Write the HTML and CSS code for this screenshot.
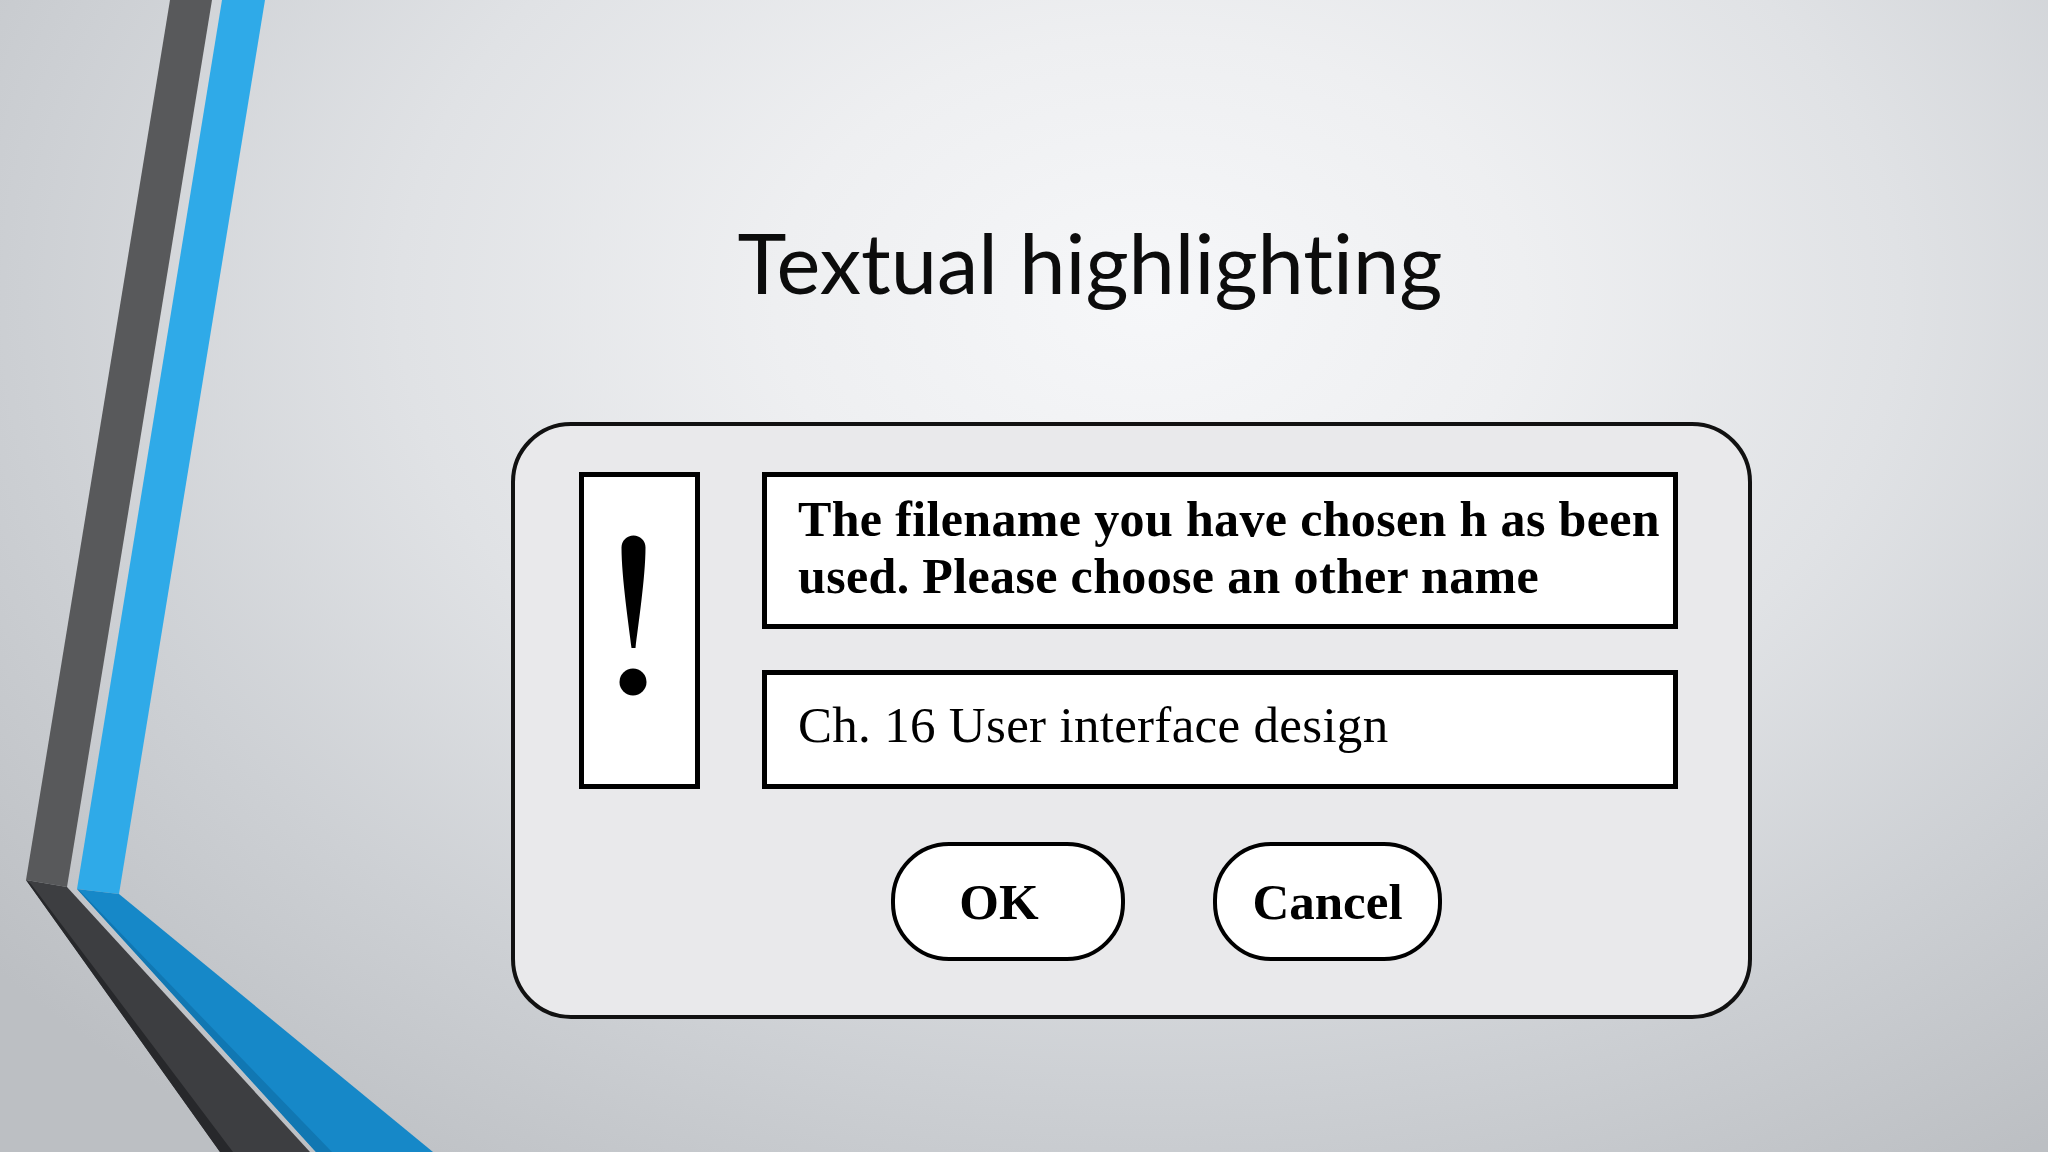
FILE: index.html
```html
<!DOCTYPE html>
<html lang="en">
<head>
<meta charset="utf-8">
<title>Textual highlighting</title>
<link rel="stylesheet" href="styles.css">
</head>
<body>
<div class="slide">
  <svg class="deco" width="2048" height="1152" viewBox="0 0 2048 1152" aria-hidden="true">
    <polygon class="d-up" points="170,0 212,0 67,887 26,880"/>
    <polygon class="b-up" points="222,0 265,0 119,894 77,889"/>
    <polygon class="d-low" points="26,880 67,887 310,1152 220,1152"/>
    <polygon class="d-edge" points="26,880 31,884 233,1152 220,1152"/>
    <polygon class="b-low" points="77,889 119,894 433,1152 316,1152"/>
    <polygon class="b-edge" points="77,889 81,892 332,1152 316,1152"/>
  </svg>
  <main class="content">
    <h1 class="title">Textual highlighting</h1>
    <div class="dialog">
      <div class="top-row">
        <div class="alert-icon">
          <svg width="111" height="307" viewBox="0 0 111 307">
            <path d="M37.5 70.5 A12 12 0 0 1 61.5 70.5 C61.5 100 54 150 51.5 171 L47.5 171 C45 150 37.5 100 37.5 70.5 Z" fill="#000"/>
            <circle cx="49" cy="205" r="13.5" fill="#000"/>
          </svg>
        </div>
        <div class="fields">
          <div class="message">The filename you have chosen h as been<br>used. Please choose an other name</div>
          <div class="filename">Ch. 16 User interface design</div>
        </div>
      </div>
      <div class="buttons">
        <div class="btn btn-ok">OK</div>
        <div class="btn btn-cancel">Cancel</div>
      </div>
    </div>
  </main>
</div>
</body>
</html>
```
FILE: styles.css
```css
html, body {
  margin: 0;
  padding: 0;
}

body {
  background: #d0d3d6;
}

.slide {
  position: relative;
  width: 2048px;
  height: 1152px;
  overflow: hidden;
  background:
    radial-gradient(ellipse 1500px 1050px at 1150px 300px,
      #f6f7f9 0%, #eeeff1 25%, #e0e2e5 50%, #cdd0d4 75%, #bcbfc3 100%);
}

.deco {
  position: absolute;
  left: 0;
  top: 0;
}

.d-up { fill: #58595b; }
.b-up { fill: #2faae8; }
.d-low { fill: #3d3e41; }
.d-edge { fill: #27282b; }
.b-low { fill: #1688c8; }
.b-edge { fill: #1177b2; }

.content {
  position: relative;
  display: flex;
  flex-direction: column;
  padding-top: 212px;
}

.title {
  margin: 0;
  padding-left: 132px;
  text-align: center;
  font-family: Lato, "Open Sans", sans-serif;
  font-weight: 400;
  font-size: 83px;
  line-height: 100px;
  color: #0c0c0c;
  font-variant-ligatures: none;
}

.dialog {
  margin-top: 110px;
  margin-left: 511px;
  width: 1241px;
  box-sizing: border-box;
  border: 4px solid #111;
  border-radius: 60px;
  background: #e9e9eb;
  padding: 46px 70px 54px 64px;
  font-family: "Liberation Serif", "Times New Roman", serif;
  color: #000;
}

.top-row {
  display: flex;
  gap: 62px;
}

.alert-icon {
  width: 121px;
  height: 317px;
  box-sizing: border-box;
  border: 5px solid #000;
  background: #fff;
}

.alert-icon svg {
  display: block;
}

.fields {
  display: flex;
  flex-direction: column;
  gap: 41px;
  width: 916px;
}

.message {
  height: 157px;
  box-sizing: border-box;
  border: 5px solid #000;
  background: #fff;
  padding: 14px 0 0 31px;
  font-weight: 700;
  font-size: 50px;
  line-height: 57px;
  letter-spacing: 0.35px;
  white-space: nowrap;
}

.filename {
  height: 119px;
  box-sizing: border-box;
  border: 5px solid #000;
  background: #fff;
  padding: 22px 0 0 31px;
  font-weight: 400;
  font-size: 51px;
  line-height: 57px;
  letter-spacing: 0.3px;
  white-space: nowrap;
}

.buttons {
  display: flex;
  gap: 88px;
  margin-top: 53px;
  padding-left: 312px;
}

.btn {
  height: 119px;
  box-sizing: border-box;
  border: 4px solid #000;
  border-radius: 58px;
  background: #fff;
  display: flex;
  align-items: center;
  justify-content: center;
  font-weight: 700;
  font-size: 51px;
}

.btn-ok {
  width: 234px;
  padding-right: 18px;
}

.btn-cancel {
  width: 229px;
}
```
